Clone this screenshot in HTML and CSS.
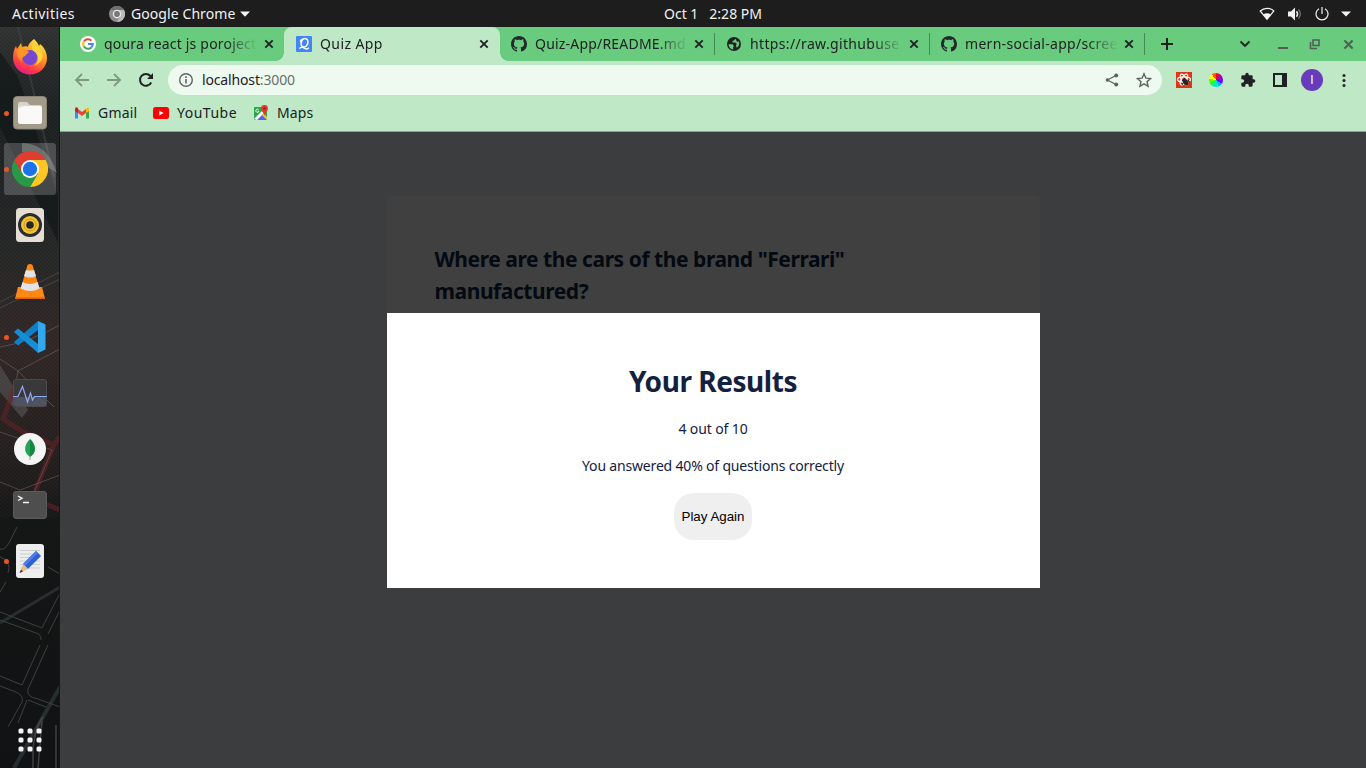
FILE: index.html
```html
<!DOCTYPE html>
<html lang="en">
<head>
<meta charset="utf-8">
<title>Quiz App</title>
<link rel="stylesheet" href="styles.css">
</head>
<body>
<svg class="defs" width="0" height="0" aria-hidden="true">
  <symbol id="x" viewBox="0 0 10 10"><path d="M1.3 1.3l7.4 7.4M8.7 1.3L1.3 8.7" fill="none" stroke="currentColor" stroke-width="1.9"/></symbol>
  <symbol id="github" viewBox="0 0 16 16"><path fill="#24292f" d="M8 0C3.58 0 0 3.58 0 8c0 3.54 2.29 6.53 5.47 7.59.4.07.55-.17.55-.38 0-.19-.01-.82-.01-1.49-2.01.37-2.53-.49-2.69-.94-.09-.23-.48-.94-.82-1.13-.28-.15-.68-.52-.01-.53.63-.01 1.08.58 1.23.82.72 1.21 1.87.87 2.33.66.07-.52.28-.87.51-1.07-1.78-.2-3.64-.89-3.64-3.95 0-.87.31-1.59.82-2.15-.08-.2-.36-1.02.08-2.12 0 0 .67-.21 2.2.82.64-.18 1.32-.27 2-.27s1.36.09 2 .27c1.53-1.04 2.2-.82 2.2-.82.44 1.1.16 1.92.08 2.12.51.56.82 1.27.82 2.15 0 3.07-1.87 3.75-3.65 3.95.29.25.54.73.54 1.48 0 1.07-.01 1.93-.01 2.2 0 .21.15.46.55.38A8.01 8.01 0 0 0 16 8c0-4.42-3.58-8-8-8z"/></symbol>
</svg>
<header class="topbar">
  <div class="top-left">
    <span class="activities">Activities</span>
    <svg width="16" height="16" viewBox="0 0 16 16"><circle cx="8" cy="8" r="8" fill="#8d8d8d"/><path d="M8 4h7A8 8 0 0 1 8 16l3.4-6z" fill="#b9b9b9"/><path d="M1.2 4A8 8 0 0 1 15 4H8z" fill="#6f6f6f"/><circle cx="8" cy="8" r="4.3" fill="#e6e6e6"/><circle cx="8" cy="8" r="2.9" fill="#777"/></svg>
    <span class="app-name">Google Chrome</span>
    <svg width="10" height="6" viewBox="0 0 10 6"><path d="M0 .5h10L5 5.7z" fill="#f2f2f2"/></svg>
  </div>
  <div class="clock"><span class="date">Oct 1</span><span class="time">2:28 PM</span></div>
  <div class="status">
    <svg width="16" height="14" viewBox="0 0 16 14"><path d="M1.2 4C5 .4 11 .4 14.8 4L8 12.3z" fill="none" stroke="#f2f2f2" stroke-width="1.2"/><path d="M4.200 7.400C6.500 6 9.500 6 11.800 7.400L8 12.500z" fill="#f2f2f2"/></svg>
    <svg width="16" height="14" viewBox="0 0 16 14"><path d="M1 4.500h3l4-4v13l-4-4H1z" fill="#f2f2f2"/><path d="M9.500 4.200q2.200 2.800 0 5.600" fill="none" stroke="#f2f2f2" stroke-width="1.400"/><path d="M11.500 2.500q3.700 4.500 0 9" fill="none" stroke="#777" stroke-width="1.200"/></svg>
    <svg width="14" height="14" viewBox="0 0 14 14"><path d="M4 1.700a6 6 0 1 0 6 0M7 0v7" fill="none" stroke="#f2f2f2" stroke-width="1.200"/></svg>
    <svg width="10" height="6" viewBox="0 0 10 6"><path d="M0 .5h10L5 5.500z" fill="#f2f2f2"/></svg>
  </div>
</header>
<div class="desktop">
  <nav class="dock">
    <svg class="wallpaper" width="60" height="741" viewBox="0 0 60 741">
      <defs><linearGradient id="wg" x2="0" y2="1"><stop offset="0" stop-color="#303131"/><stop offset=".12" stop-color="#1c2020"/><stop offset=".3" stop-color="#242626"/><stop offset=".42" stop-color="#302625"/><stop offset=".58" stop-color="#231e1e"/><stop offset=".67" stop-color="#151616"/><stop offset="1" stop-color="#101213"/></linearGradient>
      <pattern id="mesh" width="4" height="4" patternUnits="userSpaceOnUse"><path d="M0 0h2v2H0zM2 2h2v2H2z" fill="#fff" fill-opacity=".025"/></pattern></defs>
      <path fill="url(#wg)" d="M0 0h60v741H0z"/><path fill="url(#mesh)" d="M0 0h60v490H0z"/>
      <path d="M0 25l18 25 40 120v45L0 100z" fill="#101516" opacity=".65"/>
      <path d="M18 0l36 150" stroke="#454949" stroke-width="2" opacity=".5"/>
      <path d="M22 116q25 0 35 30l-8-5q-10-16-27-16z" fill="#777" opacity=".55"/>
      <path d="M0 275L60 245M0 281l60-29" stroke="#55504f" opacity=".7"/>
      <path d="M0 320q30-5 60-22M0 332l18 12 42-22M18 344l-6 34M18 344l36 36" stroke="#665d5b" fill="none" stroke-width="1" opacity=".7"/>
      <path d="M0 338l28 45-6 8L0 365z" fill="#606060" opacity=".5"/>
      <path d="M18 352l-15 40 22 14 29 12 6-9M55 415l-24 60M30 405l-7 25M39 474l21 9" fill="none" stroke="#672327" stroke-width="5" opacity=".55"/>
      <path d="M0 405l52 18-23 54M0 455l20 8 40-15" fill="none" stroke="#675456" stroke-width="1" opacity=".7"/>
      <path d="M17 500l-8 16q-5 8-9 6M0 530q12 4 8 16M48 540l12 7M6 555l-6 10" fill="none" stroke="#404444"/>
      <path d="M0 596L60 560" stroke="#334041" stroke-width="3" opacity=".6"/>
      <path d="M0 585l42 16 18-35M0 593l36 13q5 1 5 7M48 607l12-24M40 618L22 658 0 649M48 618L28 662q-2 8 10 10l22 8M0 659l16 6q8 4 6 10L8 700M27 673L18 696M28 673l18 7" fill="none" stroke="#3b4142"/>
      <path d="M60 660L14 741" stroke="#344041" stroke-width="4" opacity=".6"/><path d="M33 741v-20q3-23 10-31M38 741l4-47M56 741v-43" fill="none" stroke="#505555" stroke-width="1.500" opacity=".7"/>
      <path d="M59.500 0v741" stroke="#151616"/>
    </svg>
    <div class="slot"><svg width="36" height="36" viewBox="0 0 36 36"><defs><linearGradient id="ff" x1=".8" y1="0" x2=".3" y2="1"><stop stop-color="#fff04a"/><stop offset=".45" stop-color="#ff9320"/><stop offset=".78" stop-color="#ff3b4b"/><stop offset="1" stop-color="#e2158a"/></linearGradient></defs><path d="M22 0c2 2 4 4 5 7l1-2c4 3 7 8 7 14a17 16.500 0 0 1-34 0c0-5 1-9 3-12l1 3 4-6 1 4c2-1 5-1 6 0 0-3 3-5 6-8z" fill="url(#ff)"/><circle cx="18" cy="18.500" r="7.500" fill="#7546cf"/><path d="M6 10c4-1 8 0 11 3l-4 4c-3 1-4 3-3 6-4-3-6-8-4-13z" fill="#ff9424"/><path d="M22 4c-3 3-3 6 1 9 4 4 4 10-1 14 8-3 11-10 7-16-2-3-5-4-7-7z" fill="#ffd33a"/></svg></div>
    <div class="slot running"><svg width="34" height="34" viewBox="0 0 34 34"><rect x=".5" y=".5" width="33" height="32.500" rx="3.500" fill="#a39b8a" stroke="#8b8476"/><path d="M5 8q0-2 2-2h7l3 3h10q2 0 2 2v3H5z" fill="#d8d3ca"/><rect x="5" y="10" width="24" height="18" rx="2" fill="#faf9f7"/><path d="M5 12V9h10l3-1" fill="#e0dcd4"/></svg></div>
    <div class="slot running active"><svg width="36" height="36" viewBox="0 0 36 36"><path d="M18 9h15.600A18 18 0 0 1 18 36l7.800-13.500z" fill="#ffc624"/><path d="M25.800 22.500L18 36A18 18 0 0 1 2.400 9l7.800 13.500z" fill="#2a9947"/><path d="M10.200 22.500L2.400 9a18 18 0 0 1 31.200 0H18z" fill="#de3d30"/><circle cx="18" cy="18" r="9" fill="#fff"/><circle cx="18" cy="18" r="7.200" fill="#1a73e8"/></svg></div>
    <div class="slot"><svg width="28" height="34" viewBox="0 0 28 34"><rect width="28" height="34" rx="3.500" fill="#e4ded5"/><circle cx="14" cy="17" r="12" fill="#2b2c33"/><circle cx="14" cy="17" r="9" fill="#f4c52a"/><circle cx="14" cy="17" r="6" fill="none" stroke="#c99a1c"/><circle cx="14" cy="17" r="3.800" fill="#25262a"/></svg></div>
    <div class="slot"><svg width="30" height="36" viewBox="0 0 30 36"><path d="M3 24h24l3 12H0z" fill="#ff8915"/><path d="M12.500 2q2.500-2 5 0L25 28q-10 6-20 0z" fill="#ff8610"/><path d="M11 7q4 1 8 0l2 6q-6 3-12 0zM7.600 19q7 4 15 0l2 6.500q-9 5-19 0z" fill="#e1e5e7"/><path d="M0 34.500h30V36H0z" fill="#dc5f0c"/></svg></div>
    <div class="slot running"><svg width="32" height="32" viewBox="0 0 32 32"><path d="M24 0l7.500 3.500v25L24 32z" fill="#32a9ec"/><path d="M24 0v9L4 24.500 0 21z" fill="#117fc5"/><path d="M0 11l4-3.500L24 23v9z" fill="#168dd5"/></svg></div>
    <div class="slot"><svg width="34" height="28" viewBox="0 0 34 28"><rect x=".5" y=".5" width="33" height="27" rx="2.500" fill="#39393b" stroke="#4b4b4b"/><path d="M1 18h32v9H1z" fill="#50535f"/><path d="M0 17.500h5L9.500 7.500l5 15.500 3-9 2 7 2-3.500H34" fill="none" stroke="#8eaaf0" stroke-width="1.200"/></svg></div>
    <div class="slot"><svg width="32" height="32" viewBox="0 0 32 32"><circle cx="16" cy="16" r="16" fill="#f5f5f5"/><path d="M16 6c7 7 6 14 0 18-6-4-7-11 0-18z" fill="#22a454"/><path d="M16 6c7 7 6 14 0 18z" fill="#178744"/><path d="M16 23v4" stroke="#999"/></svg></div>
    <div class="slot"><svg width="34" height="28" viewBox="0 0 34 28"><rect x=".5" y=".5" width="33" height="27" rx="2.500" fill="#4e4e4e" stroke="#5b5b5b"/><path d="M5 5l4 2.300L5 9.500M10 11.500h6" fill="none" stroke="#f5f5f5" stroke-width="1.400"/></svg></div>
    <div class="slot running"><svg width="28" height="34" viewBox="0 0 28 34"><rect width="28" height="34" rx="3" fill="#eee"/><path d="M4 6.500h20M4 10h20M4 13.500h20M4 17h20M4 20.500h20M4 24h20" stroke="#ccc"/><path d="M20 7l5 5-13 13-5-5z" fill="#2e60d1"/><path d="M20 7l2 2L9 22l-2-2z" fill="#4b7fe4"/><path d="M7 20l5 5-8 4z" fill="#e6bd87"/><path d="M5 25.500l2 2-3.500 1.500z" fill="#333"/></svg></div>
    <div class="slot launcher"><svg width="24" height="24" viewBox="0 0 24 24" fill="#f5f5f5"><rect x=".5" y=".5" width="5" height="5" rx="1.500"/><rect x="9.500" y=".5" width="5" height="5" rx="1.500"/><rect x="18.500" y=".5" width="5" height="5" rx="1.500"/><rect x=".5" y="9.500" width="5" height="5" rx="1.500"/><rect x="9.500" y="9.500" width="5" height="5" rx="1.500"/><rect x="18.500" y="9.500" width="5" height="5" rx="1.500"/><rect x=".5" y="18.500" width="5" height="5" rx="1.500"/><rect x="9.500" y="18.500" width="5" height="5" rx="1.500"/><rect x="18.500" y="18.500" width="5" height="5" rx="1.500"/></svg></div>
  </nav>
  <section class="window">
    <div class="tabs">
      <div class="tab first"><svg width="16" height="16" viewBox="0 0 16 16"><circle cx="8" cy="8" r="8" fill="#fff"/><g fill="none" stroke-width="2"><path d="M4 5.300A4.800 4.800 0 0 1 11.400 4.600" stroke="#ea4335"/><path d="M4.100 10.700a4.800 4.800 0 0 1 0-5.500" stroke="#fbbc05"/><path d="M11.300 11.500a4.800 4.800 0 0 1-7.300-1" stroke="#34a853"/><path d="M8 8h4.800q0 2.200-1.500 3.500" stroke="#4285f4"/></g></svg><span class="tab-title t1">qoura react js poroject</span><svg class="close" width="10" height="10"><use href="#x"/></svg></div>
      <div class="tab current"><svg width="16" height="16" viewBox="0 0 16 16"><rect width="16" height="16" rx="1" fill="#4285f4"/><g fill="none" stroke="#fff"><ellipse cx="8.500" cy="6.800" rx="3.300" ry="4.300" transform="rotate(18 8.500 6.800)" stroke-width="1.600"/><path d="M7.800 3.200Q4.300 3 4.600 5.800M3.300 12.600q1.600-2 3.600-1.200 2 1.200 3.600 1.500 1.500.1 2.300-1.300" stroke-width="1.500"/></g></svg><span class="tab-title t2">Quiz App</span><svg class="close" width="10" height="10"><use href="#x"/></svg></div>
      <div class="tab divided"><svg width="16" height="16"><use href="#github"/></svg><span class="tab-title t3">Quiz-App/README.md</span><svg class="close" width="10" height="10"><use href="#x"/></svg></div>
      <div class="tab divided"><svg width="16" height="16" viewBox="0 0 16 16"><circle cx="8" cy="8" r="7" fill="#202124"/><path d="M2.500 8.200l4 .1 1.500 2-1 1 .3 2.300Q3 13 2.500 8.200zM9.500 2.800L8 4.500 6.500 5v1.500h3L11 8l-1 1 .5 2.500 1.500-.5q2-3 1-5.500l-2 .2z" fill="#69cb7d"/></svg><span class="tab-title t4">https://raw.githubuse</span><svg class="close" width="10" height="10"><use href="#x"/></svg></div>
      <div class="tab divided"><svg width="16" height="16"><use href="#github"/></svg><span class="tab-title t5">mern-social-app/scree</span><svg class="close" width="10" height="10"><use href="#x"/></svg></div>
      <svg class="plus" width="12" height="12" viewBox="0 0 12 12"><path d="M0 6h12M6 0v12" stroke="#202124" stroke-width="2"/></svg>
      <div class="controls">
        <svg width="12" height="12" viewBox="0 0 12 12"><path d="M1.500 3.500L6 8l4.500-4.500" fill="none" stroke="#202124" stroke-width="1.800"/></svg>
        <svg width="12" height="12" viewBox="0 0 12 12"><path d="M1 10h10" stroke="#565c57" stroke-width="2"/></svg>
        <svg width="12" height="12" viewBox="0 0 12 12"><path d="M4 2h6v5.500H4zM1.500 4v6.500H8" fill="none" stroke="#565c57" stroke-width="1.600"/></svg>
        <svg class="win-close" width="11" height="11"><use href="#x"/></svg>
      </div>
    </div>
    <div class="toolbar">
      <svg width="16" height="16" viewBox="0 0 16 16"><path d="M15 8H2M8 2L2 8l6 6" fill="none" stroke="#7c9a82" stroke-width="1.800"/></svg>
      <svg width="16" height="16" viewBox="0 0 16 16"><path d="M1 8h13M8 2l6 6-6 6" fill="none" stroke="#7c9a82" stroke-width="1.800"/></svg>
      <svg width="16" height="16" viewBox="0 0 16 16"><path d="M13.200 10.500A5.900 5.900 0 1 1 12.400 4" fill="none" stroke="#202124" stroke-width="2"/><path d="M15 1v6H9z" fill="#202124"/></svg>
      <div class="address">
        <svg width="14" height="14" viewBox="0 0 14 14"><circle cx="7" cy="7" r="6.300" fill="none" stroke="#5f6368" stroke-width="1.400"/><path d="M7 6v4.500M7 3.200v1.700" stroke="#5f6368" stroke-width="1.600"/></svg>
        <span class="url">localhost<span class="port">:3000</span></span>
        <svg class="share" width="14" height="14" viewBox="0 0 14 14"><path d="M11 2.500L2.500 7l8.500 4.500" fill="none" stroke="#5a645e" stroke-width="1.300"/><g fill="#5a645e"><circle cx="11.200" cy="2.400" r="2"/><circle cx="2.500" cy="7" r="1.800"/><circle cx="11.200" cy="11.600" r="2"/></g></svg>
        <svg width="16" height="16" viewBox="0 0 16 16"><path d="M8 1.800l1.900 4.400 4.700.4-3.600 3.100 1.100 4.600L8 11.900l-4.100 2.400L5 9.700 1.400 6.600l4.700-.4z" fill="none" stroke="#5a645e" stroke-width="1.400"/></svg>
      </div>
      <div class="extensions">
        <svg width="16" height="16" viewBox="0 0 16 16"><path fill="#df3514" d="M0 0h16v16H0z"/><g fill="none" stroke="#fff" stroke-width="1.200"><ellipse cx="8" cy="7.500" rx="6.500" ry="2.600"/><ellipse cx="8" cy="7.500" rx="6" ry="2.500" transform="rotate(60 8 7.500)"/><ellipse cx="8" cy="7.500" rx="6" ry="2.500" transform="rotate(120 8 7.500)"/></g><ellipse cx="9.500" cy="10" rx="2.500" ry="3.800" transform="rotate(-35 9.500 10)" fill="#302124"/><path d="M6 9l3-3M8 12l5-4M12 9l2 1M7 11l-1 2" stroke="#302124"/></svg>
        <div class="wheel"></div>
        <svg width="16" height="16" viewBox="0 0 24 24"><path fill="#202124" d="M20.500 11H19V7a2 2 0 0 0-2-2h-4V3.500a2.500 2.500 0 0 0-5 0V5H4a2 2 0 0 0-2 2v3.800h1.500a2.700 2.700 0 0 1 0 5.400H2V20a2 2 0 0 0 2 2h3.800v-1.500a2.700 2.700 0 0 1 5.400 0V22H17a2 2 0 0 0 2-2v-4h1.500a2.500 2.500 0 0 0 0-5z"/></svg>
        <svg width="16" height="16" viewBox="0 0 16 16"><path fill="#202124" fill-rule="evenodd" d="M1 1h14v14H1zM3 3h7v10H3z"/></svg>
        <span class="avatar">I</span>
        <svg class="more" width="4" height="16" viewBox="0 0 4 16" fill="#202124"><circle cx="2" cy="3.500" r="1.500"/><circle cx="2" cy="8.500" r="1.500"/><circle cx="2" cy="13.500" r="1.500"/></svg>
      </div>
    </div>
    <div class="bookmarks">
      <svg width="16" height="16" viewBox="0 0 16 16"><path fill="#4285f4" d="M1 4l3 2v7.500H1z"/><path fill="#34a853" d="M12 6l3-2v9.500h-3z"/><path fill="#ea4335" d="M4 4l4 3 4-3v4l-4 3-4-3z"/><path fill="#c5221f" d="M1 3.500Q2 1.500 4 3v5L1 6z"/><path fill="#fbbc04" d="M12 4q2-2.500 3-.5V6l-3 2z"/></svg><span class="gmail">Gmail</span>
      <svg width="16" height="16" viewBox="0 0 16 16"><rect y="2" width="16" height="12" rx="2.500" fill="#f00"/><path d="M6.300 5.500v5l4.300-2.500z" fill="#fff"/></svg><span class="youtube">YouTube</span>
      <svg width="16" height="16" viewBox="0 0 16 16"><rect x="1" y="2" width="13" height="13" rx="1" fill="#2ba84a"/><path d="M2 15l6-6 6 6z" fill="#5267e8"/><path d="M1 14L12 3l2 2-5 5-5 5z" fill="#fff"/><path d="M10 8l4 4v3l-5-5z" fill="#e9c843"/><path d="M11.500 0a3.400 3.400 0 0 1 3.400 3.400c0 3-3.400 4.600-3.400 7.600 0-3-3.400-4.600-3.400-7.600A3.400 3.400 0 0 1 11.500 0z" fill="#e33a2e"/><circle cx="11.500" cy="3.400" r="1.200" fill="#8b1d18"/><path d="M5.700 4.800a1.600 1.600 0 1 0 .3 1.400H4.500" fill="none" stroke="#fff" stroke-width=".9"/></svg><span class="maps">Maps</span>
    </div>
    <main class="page">
      <article class="quiz"><h2 class="question">Where are the cars of the brand "Ferrari"<br>manufactured?</h2></article>
      <section class="modal"><h1 class="heading">Your Results</h1><p class="score">4 out of 10</p><p class="percent">You answered 40% of questions correctly</p><button class="again">Play Again</button></section>
    </main>
  </section>
</div>
</body>
</html>
```
FILE: styles.css
```css
* { box-sizing: border-box; }
body { margin: 0; width: 1366px; height: 768px; overflow: hidden; font: 14px/20px "Noto Sans", sans-serif; color: #202124; }
svg { display: block; flex: none; }
.defs { position: absolute; }
.topbar { height: 27px; background: #1d1d1d; color: #f2f2f2; display: grid; grid-template-columns: 664px 98px 1fr; align-items: center; }
.top-left { display: flex; align-items: center; padding-left: 12px; }
.activities { width: 97px; letter-spacing: .47px; }
.app-name { width: 104px; margin: 0 5px 0 6px; white-space: nowrap; letter-spacing: .08px; }
.clock { display: flex; gap: 11px; white-space: nowrap; }
.status { display: flex; align-items: center; justify-content: flex-end; padding-right: 15px; gap: 12px; }
.desktop { display: flex; height: 741px; }
.dock { position: relative; width: 60px; flex: none; display: flex; flex-direction: column; padding-top: 2px; }
.wallpaper { position: absolute; left: 0; top: 0; }
.slot { position: relative; height: 56px; display: flex; align-items: center; justify-content: center; flex: none; }
.slot.running::before { content: ""; position: absolute; left: 4px; top: 26px; width: 5px; height: 5px; border-radius: 50%; background: #e95420; }
.slot.active::after { content: ""; position: absolute; left: 4px; top: 2px; width: 52px; height: 52px; border-radius: 3px; background: rgba(255,255,255,.2); }
.slot.active svg { position: relative; z-index: 1; }
.slot.active::before { z-index: 1; }
.launcher { margin-top: auto; }
.window { flex: 1; display: flex; flex-direction: column; background: #bfe8c6; }
.tabs { height: 34px; display: flex; background: #69cb7d; }
.tab { width: 215px; display: flex; align-items: center; padding: 0 11px; position: relative; }
.tab.first { width: 224px; padding-left: 20px; padding-right: 10px; }
.tab.current { width: 216px; background: #bfe8c6; border-radius: 8px 8px 0 0; padding: 0 11px 0 12px; }
.tab.current::before, .tab.current::after { content: ""; position: absolute; bottom: 0; width: 8px; height: 8px; }
.tab.current::before { left: -8px; background: radial-gradient(circle at 0 0, transparent 7.5px, #bfe8c6 8px); }
.tab.current::after { right: -8px; background: radial-gradient(circle at 100% 0, transparent 7.5px, #bfe8c6 8px); }
.tab.divided { border-right: 1px solid transparent; border-image: linear-gradient(transparent 7px, #448b53 7px, #448b53 27px, transparent 27px) 1; padding-right: 10px; }
.tab-title { flex: none; width: 152px; margin-left: 8px; white-space: nowrap; overflow: hidden; -webkit-mask-image: linear-gradient(90deg, #000 122px, transparent 153px); mask-image: linear-gradient(90deg, #000 122px, transparent 153px); }
.t1 { letter-spacing: .2px; }
.t2 { letter-spacing: .4px; }
.t3 { letter-spacing: .2px; }
.t4 { letter-spacing: .35px; }
.t5 { letter-spacing: .3px; }
.close { margin-left: auto; color: #202124; }
.plus { margin: 11px 0 0 16px; }
.controls { display: flex; align-items: center; margin-left: auto; padding-right: 12px; gap: 23px; }
.controls svg:nth-child(2) { margin-left: 3px; }
.controls svg:nth-child(3) { margin-left: -3px; }
.win-close { color: #565c57; margin-left: -1px; }
.toolbar { height: 38px; display: flex; align-items: center; padding-left: 14px; }
.toolbar > svg { margin-right: 16px; }
.address { width: 994px; height: 30px; margin-left: -2px; background: #eefaf0; border-radius: 15px; display: flex; align-items: center; padding: 0 10px 0 11px; }
.url { margin-left: 9px; letter-spacing: -.15px; }
.port { color: #69706b; }
.share { margin-left: auto; margin-right: 17px; }
.extensions { display: flex; align-items: center; margin-left: 14px; gap: 16px; }
.wheel { width: 14px; height: 14px; margin: 0 1px; border-radius: 50%; background: conic-gradient(#f02 0 8%, #a0a 8% 20%, #60f 20% 34%, #00b7ff 34% 44%, #00e6d0 44% 56%, #0f5 56% 68%, #5f0 68% 78%, #ff0 78% 90%, #f50 90%); }
.avatar { width: 22px; height: 22px; margin: 0 -3px; border-radius: 50%; background: #683bbc; color: #fff; font: 12px/22px Roboto, sans-serif; text-align: center; }
.more { margin-left: 6px; }
.bookmarks { height: 33px; padding: 0 0 4px 14px; display: flex; align-items: center; border-bottom: 1px solid #86a78b; }
.bookmarks span { margin-left: 8px; white-space: nowrap; }
.gmail { width: 55px; letter-spacing: .2px; }
.youtube { width: 76px; letter-spacing: .5px; }
.maps { letter-spacing: .1px; }
.page { position: relative; flex: 1; background: #3c3d3f; display: flex; justify-content: center; align-items: flex-start; padding-top: 64px; }
.quiz { width: 653px; height: 270px; background: #404040; border-radius: 4px; padding: 47px 48px; color: #040912; }
.question { margin: 0; font-size: 21px; line-height: 32px; font-weight: 700; white-space: nowrap; letter-spacing: -.44px; }
.modal { position: absolute; left: 327px; top: 181px; width: 653px; height: 275px; background: #fff; color: #13213f; display: flex; flex-direction: column; align-items: center; padding: 47px 1px 0 0; }
.modal h1, .modal p { white-space: nowrap; }
.heading { font-size: 28px; line-height: 42px; margin: 0 0 16px; letter-spacing: -.45px; }
.score, .percent { margin: 0 0 16px; line-height: 21px; letter-spacing: -.12px; }
.percent { margin-bottom: 17px; letter-spacing: -.18px; }
.again { width: 78px; height: 47px; padding: 0; border: 0; border-radius: 20px; background: #efefef; color: #000; font: 13.333px "Liberation Sans", Arial, sans-serif; }
```
